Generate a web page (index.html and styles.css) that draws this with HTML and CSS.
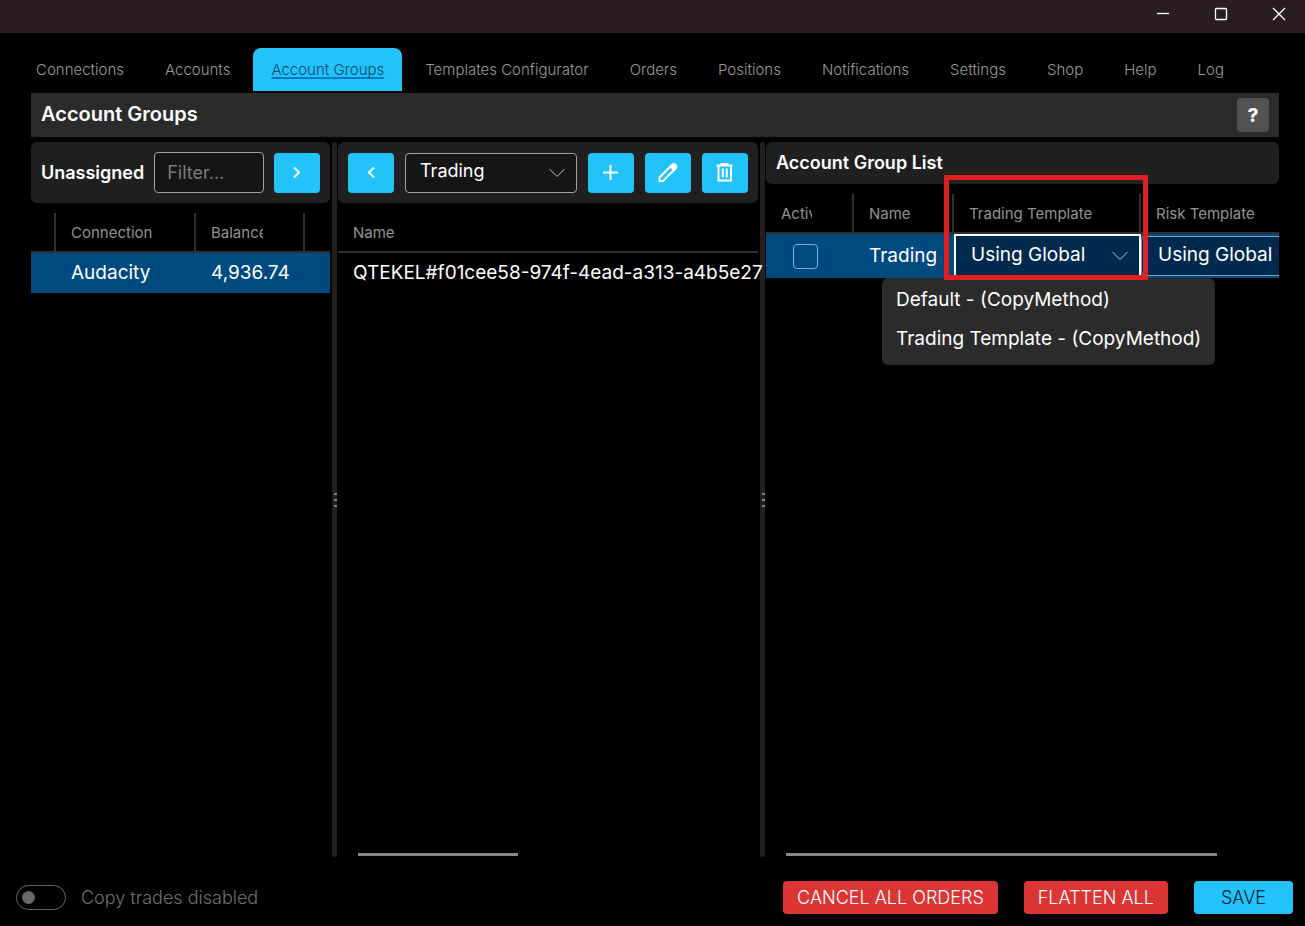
FILE: index.html
```html
<!DOCTYPE html>
<html lang="en">
<head>
<meta charset="utf-8">
<title>Account Groups</title>
<link rel="stylesheet" href="styles.css">
</head>
<body>
<div class="app">
  <header class="titlebar">
    <button class="win-btn" aria-label="Minimize"><svg width="14" height="14" viewBox="0 0 14 14"><path d="M1 6.500h12"/></svg></button>
    <button class="win-btn" aria-label="Maximize"><svg width="14" height="14" viewBox="0 0 14 14"><rect x="1.500" y="1.500" width="11" height="11" rx="1"/></svg></button>
    <button class="win-btn" aria-label="Close"><svg width="14" height="14" viewBox="0 0 14 14"><path d="M1 1l12 12M13 1L1 13"/></svg></button>
  </header>

  <nav class="tabs">
    <a class="tab" href="#">Connections</a>
    <a class="tab" href="#">Accounts</a>
    <a class="tab tab-active" href="#" aria-current="page">Account Groups</a>
    <a class="tab" href="#">Templates Configurator</a>
    <a class="tab" href="#">Orders</a>
    <a class="tab" href="#">Positions</a>
    <a class="tab" href="#">Notifications</a>
    <a class="tab" href="#">Settings</a>
    <a class="tab" href="#">Shop</a>
    <a class="tab" href="#">Help</a>
    <a class="tab" href="#">Log</a>
  </nav>

  <main class="page">
    <div class="page-head">
      <h1 class="page-title">Account Groups</h1>
      <button class="help-btn" aria-label="Help">?</button>
    </div>

    <div class="panels">
      <section class="panel">
        <div class="toolbar toolbar-tight">
          <label class="toolbar-title" for="filter">Unassigned</label>
          <input class="filter" id="filter" type="text" placeholder="Filter...">
          <button class="icon-btn" aria-label="Assign"><svg width="20" height="20" viewBox="0 0 20 20"><path d="M7 4.500l5 5-5 5"/></svg></button>
        </div>
        <div class="table-wrap">
          <table class="grid">
            <colgroup><col class="c-mark"><col class="c-conn"><col class="c-bal"><col></colgroup>
            <thead><tr><th></th><th><span class="clip">Connection</span></th><th><span class="clip">Balance</span></th><th></th></tr></thead>
            <tbody><tr class="selected"><td></td><td>Audacity</td><td>4,936.74</td><td></td></tr></tbody>
          </table>
        </div>
      </section>

      <div class="splitter"><span class="grip"></span></div>

      <section class="panel">
        <div class="toolbar">
          <button class="icon-btn" aria-label="Unassign"><svg width="20" height="20" viewBox="0 0 20 20"><path d="M13 4.500l-5 5 5 5"/></svg></button>
          <div class="select-box">
            <select class="select" aria-label="Group"><option>Trading</option></select>
            <svg class="chevron" width="16" height="10" viewBox="0 0 16 10"><path d="M.5 1L8 8.500 15.500 1"/></svg>
          </div>
          <button class="icon-btn" aria-label="Add"><svg width="20" height="20" viewBox="0 0 20 20"><path d="M9.500 2v15M2 9.500h15"/></svg></button>
          <button class="icon-btn" aria-label="Edit"><svg width="20" height="20" viewBox="0 0 20 20"><path d="M1.500 18v-3.500L13 3l3.500 3.500L5 18z"/><path class="solid" d="M12.500 3.500l2-2q1.500-1 3 .5t.5 3l-2 2z"/></svg></button>
          <button class="icon-btn" aria-label="Delete"><svg width="20" height="20" viewBox="0 0 20 20"><path d="M1.500 2.500h16M6.500 2V.8h6V2M3.500 2.500V17.500h12.500V2.500M7.800 5.500v9M11.700 5.500v9"/></svg></button>
        </div>
        <div class="table-wrap table-open">
          <table class="grid">
            <thead><tr><th>Name</th></tr></thead>
            <tbody><tr><td>QTEKEL#f01cee58-974f-4ead-a313-a4b5e27</td></tr></tbody>
          </table>
        </div>
        <div class="scrollbar scrollbar-mid"></div>
      </section>

      <div class="splitter"><span class="grip"></span></div>

      <section class="panel">
        <div class="list-head"><h2 class="list-title">Account Group List</h2></div>
        <div class="table-wrap">
          <table class="grid grid-list">
            <colgroup><col class="c-active"><col class="c-name"><col class="c-tmpl"><col class="c-tmpl"></colgroup>
            <thead><tr><th><span class="clip">Active</span></th><th><span class="clip">Name</span></th><th><span class="clip">Trading Template</span></th><th><span class="clip">Risk Template</span></th></tr></thead>
            <tbody><tr class="selected">
              <td class="check-cell"><input class="check" type="checkbox" aria-label="Active"></td>
              <td>Trading</td>
              <td class="select-cell"><div class="select-box">
                <select class="select select-focus" aria-label="Trading Template"><option>Using Global</option></select>
                <svg class="chevron" width="16" height="10" viewBox="0 0 16 10"><path d="M.5 1L8 8.500 15.500 1"/></svg>
              </div></td>
              <td class="select-cell"><div class="select-box">
                <select class="select" aria-label="Risk Template"><option>Using Global</option></select>
              </div></td>
            </tr></tbody>
          </table>
        </div>
        <div class="scrollbar scrollbar-list"></div>
        <div class="menu" role="listbox" aria-label="Trading Template">
          <button class="menu-item" role="option">Default - (CopyMethod)</button>
          <button class="menu-item" role="option">Trading Template - (CopyMethod)</button>
        </div>
        <div class="highlight"></div>
      </section>
    </div>
  </main>

  <footer class="footer">
    <label class="toggle-label"><input class="toggle" type="checkbox">Copy trades disabled</label>
    <div class="actions">
      <button class="action danger">CANCEL ALL ORDERS</button>
      <button class="action danger">FLATTEN ALL</button>
      <button class="action save">SAVE</button>
    </div>
  </footer>
</div>
</body>
</html>
```
FILE: styles.css
```css
* { box-sizing: border-box; }

body {
  margin: 0;
  background: #000;
  color: #fff;
  font-family: Inter, "Noto Sans", sans-serif;
  font-size: 19px;
}

button, input, select { font: inherit; color: inherit; margin: 0; }
button { border: 0; padding: 0; }
svg { display: block; fill: none; stroke: currentColor; }

.app { display: flex; flex-direction: column; min-height: 100vh; }

.titlebar {
  display: flex;
  justify-content: flex-end;
  height: 33px;
  padding-bottom: 5px;
  background: #2b1c20;
}
.win-btn { width: 58px; background: none; display: grid; place-items: center; }
.win-btn:last-child { margin-right: -3px; }
.win-btn svg { stroke-width: 1.300; }

.tabs { display: flex; gap: 5px; padding: 15px 17px 0 18px; }
.tab {
  padding: 0 18px;
  line-height: 43px;
  font-size: 15px;
  font-weight: 350;
  color: #9a9a9a;
  text-decoration: none;
  white-space: nowrap;
}
.tab-active {
  background: #22c3fb;
  color: #0d4868;
  border-radius: 8px 8px 0 0;
  text-decoration: underline 2px #0878c8;
  text-underline-offset: 2px;
  text-decoration-skip-ink: none;
}

.page { flex: 1; display: flex; flex-direction: column; padding: 2px 26px 0 31px; }
.page-head {
  display: flex;
  align-items: center;
  justify-content: space-between;
  height: 44px;
  padding: 0 10px;
  background: #2b2b2b;
}
.page-title { margin: 0; padding-bottom: 2px; font-size: 20px; font-weight: 600; }
.help-btn { width: 32px; height: 34px; border-radius: 4px; background: #525252; font-weight: 800; }

.panels {
  flex: 1;
  display: grid;
  grid-template-columns: minmax(0, 299fr) 8px minmax(0, 420fr) 8px minmax(0, 513fr);
  margin-top: 5px;
}
.panel { position: relative; display: flex; flex-direction: column; }
.splitter {
  margin: 0 1px 0 2px;
  padding-left: 2px;
  background: #202020;
  border-radius: 3px;
  display: grid;
  place-items: center;
}
.grip {
  width: 3px;
  height: 14px;
  background: repeating-linear-gradient(#808080 0 2px, transparent 2px 6px);
}

.toolbar {
  display: flex;
  align-items: center;
  gap: 11px;
  height: 61px;
  padding: 0 10px;
  background: #202020;
  border-radius: 6px;
  font-size: 18px;
}
.toolbar-tight { gap: 10px; }
.toolbar-title { font-weight: 600; }
.filter {
  flex: 1;
  min-width: 0;
  height: 41px;
  padding: 0 12px;
  background: #151515;
  border: 1px solid #a0a0a0;
  border-radius: 4px;
}
.filter::placeholder { color: #7c7c7c; opacity: 1; }
.icon-btn {
  flex: none;
  width: 46px;
  height: 40px;
  display: grid;
  place-items: center;
  background: #22c3fb;
  border-radius: 4px;
}
.icon-btn svg { stroke-width: 2; }
.solid { fill: currentColor; }

.select-box { position: relative; flex: 1; min-width: 0; }
.select {
  display: block;
  width: 100%;
  height: 40px;
  padding: 0 14px 4px;
  appearance: none;
  background: #151515;
  border: 1px solid #a0a0a0;
  border-radius: 4px;
}
.chevron { position: absolute; right: 12px; top: 15px; color: #c4c4c4; pointer-events: none; }

.table-wrap { margin-top: 10px; overflow: hidden; }
.table-open { overflow: visible; }
.grid { width: 100%; table-layout: fixed; border-collapse: separate; border-spacing: 0; }
.grid th {
  height: 40px;
  padding: 0 0 0 15px;
  border-bottom: 2px solid #303030;
  border-right: 2px solid #303030;
  text-align: left;
  font-size: 15px;
  font-weight: 400;
  color: #929292;
}
.grid th:last-child { border-right: 0; }
.grid td { height: 40px; padding: 0 0 2px 15px; white-space: nowrap; }
.clip { display: block; margin-right: 40px; overflow: hidden; white-space: nowrap; }
.selected { background: #004a80; }
.c-mark { width: 25px; }
.c-conn { width: 140px; }
.c-bal { width: 109px; }

.list-head { display: flex; align-items: center; height: 42px; padding: 0 10px 2px; background: #202020; border-radius: 6px; }
.list-title { margin: 0; font-size: 18px; font-weight: 600; }
.grid-list { width: 562px; }
.grid-list td { height: 44px; }
.c-active { width: 88px; }
.c-name { width: 100px; }
.c-tmpl { width: 187px; }
.grid td.check-cell { padding: 0 0 0 27px; }
.check {
  display: block;
  width: 25px;
  height: 25px;
  appearance: none;
  border: 1px solid #7fb2dc;
  border-radius: 4px;
}
.grid td.select-cell { padding: 0; }
.select-cell .select { background: #002a4d; border-color: #7fa6c6; padding-left: 16px; }
.select-cell .select-focus { height: 44px; border: 2px solid #fff; border-radius: 0; padding-left: 15px; }
.select-cell .chevron { top: 17px; right: 13px; color: #a8c6de; }

.scrollbar { height: 3px; margin: auto 0 1px 20px; background: #868686; }
.scrollbar-mid { width: 38%; }
.scrollbar-list { width: 84%; }

.menu {
  position: absolute;
  left: 116px;
  top: 136px;
  display: flex;
  flex-direction: column;
  padding: 2px 0 7px;
  background: #2b2b2b;
  border-radius: 6px;
}
.menu-item { height: 39px; padding: 0 14px; background: none; text-align: left; white-space: nowrap; }
.highlight {
  position: absolute;
  left: 178px;
  top: 33px;
  width: 204px;
  height: 105px;
  border: 5px solid #e02020;
  pointer-events: none;
}

.footer { display: flex; align-items: center; justify-content: space-between; padding: 24px 12px 12px 16px; font-size: 18px; }
.toggle-label { display: flex; align-items: center; gap: 15px; color: #707070; font-weight: 350; }
.toggle {
  width: 50px;
  height: 25px;
  padding: 5px;
  appearance: none;
  border: 1px solid #686868;
  border-radius: 13px;
}
.toggle::before { content: ""; display: block; width: 13px; height: 13px; border-radius: 50%; background: #686868; }
.actions { display: flex; gap: 26px; }
.action { height: 33px; padding: 0 14px; border-radius: 4px; font-weight: 350; }
.danger { background: #db3535; }
.save { padding: 0 27px; background: #22c3fb; color: #06222e; }
```
